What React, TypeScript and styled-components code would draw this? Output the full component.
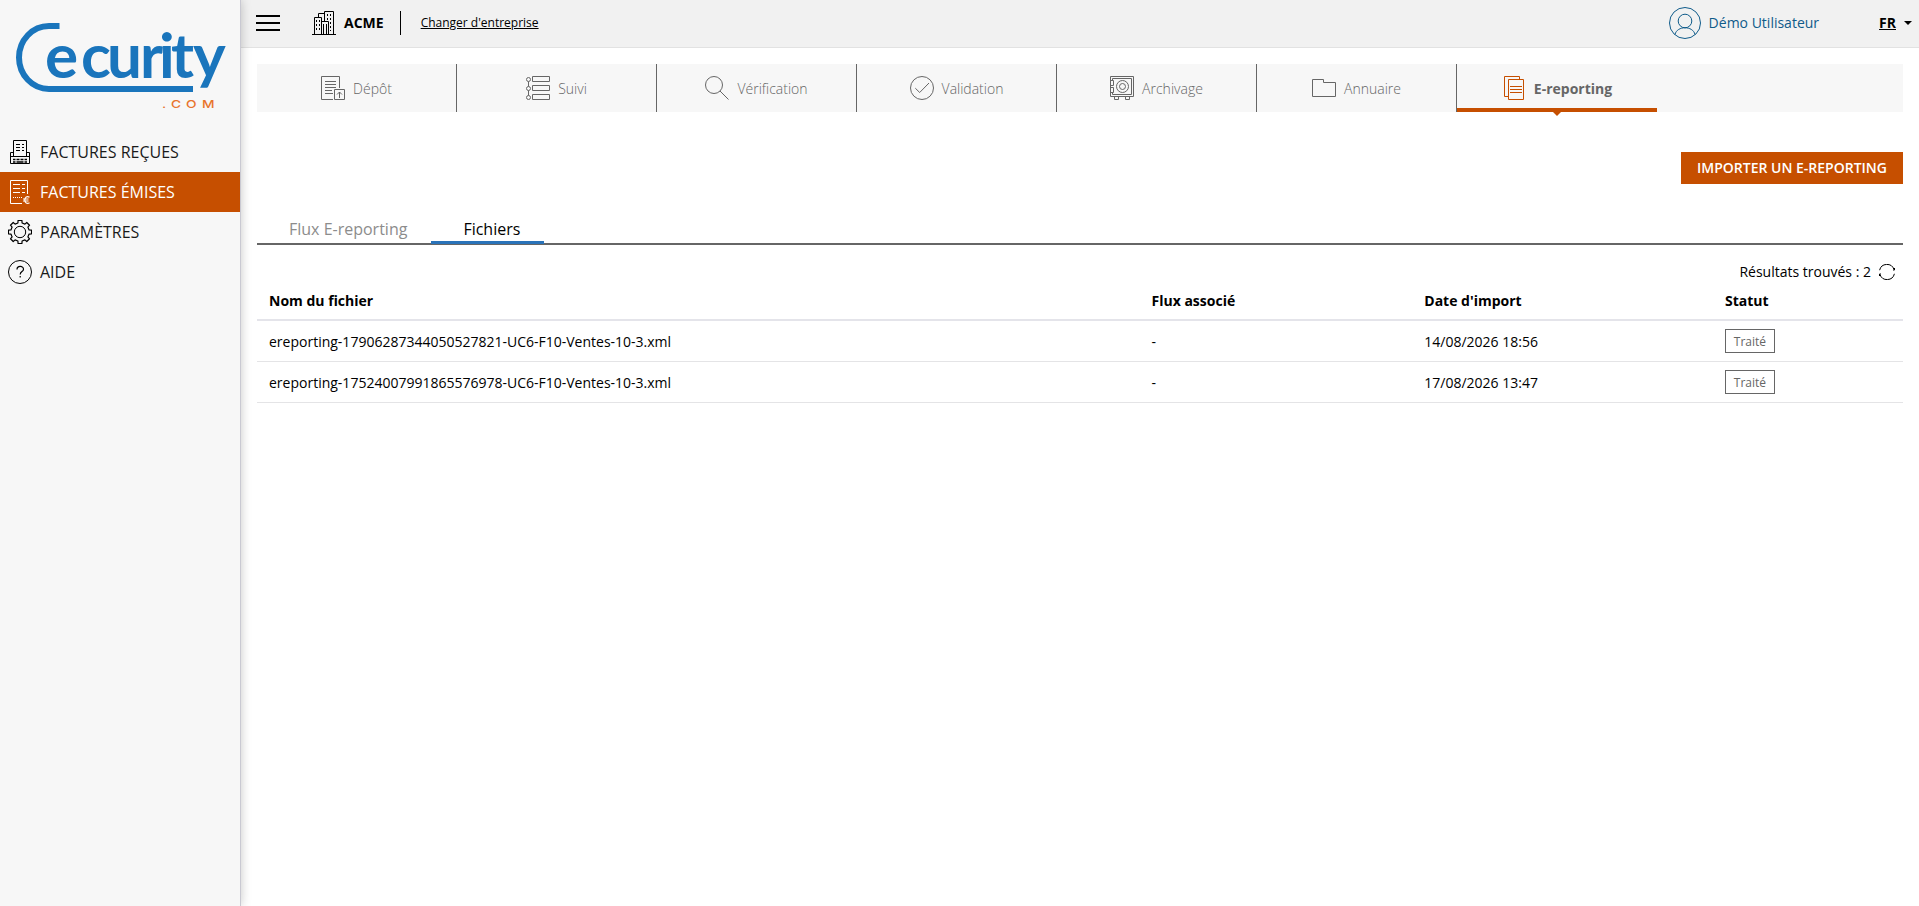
import React from "react";
import styled, { createGlobalStyle } from "styled-components";

const GlobalStyle = createGlobalStyle`
    * {
        box-sizing: border-box;
    }

    body {
        margin: 0;
        background: #fff;
        color: #000;
        font-family: "Open Sans", "Noto Sans", sans-serif;
        font-size: 14px;
    }
`

const Layout = styled.div`
    display: flex;
    min-height: 100vh;
`

const Sidebar = styled.aside`
    position: relative;
    width: 241px;
    flex: none;
    background: #f7f7f7;
    border-right: 1px solid #c9c9d2;
    box-shadow: 0 0 10px rgba(0, 0, 0, 0.22);
`

const Logo = styled.svg`
    display: block;
    width: 240px;
    height: 132px;
`

const Menu = styled.nav`
    display: flex;
    flex-direction: column;
`

const MenuItem = styled.a<{ $active?: boolean }>`
    display: flex;
    align-items: center;
    gap: 8px;
    height: 40px;
    padding: 0 8px;
    font-size: 16px;
    white-space: nowrap;
    color: ${({ $active }) => ($active ? "#fff" : "#1a1a1a")};
    background: ${({ $active }) => ($active ? "#c64f00" : "transparent")};

    svg {
        color: ${({ $active }) => ($active ? "#fff" : "#000")};
    }
`

const Main = styled.div`
    flex: 1;
    min-width: 0;
`

const Topbar = styled.header`
    display: flex;
    align-items: center;
    height: 48px;
    padding: 0 7px 2px 15px;
    background: #f1f1f1;
    border-bottom: 1px solid #e2e2e2;
`

const Burger = styled.button`
    display: flex;
    flex-direction: column;
    justify-content: space-between;
    width: 24px;
    height: 16px;
    margin-right: 32px;
    padding: 0;
    border: 0;
    background: none;

    span {
        height: 2px;
        background: #000;
    }
`

const Company = styled.div`
    display: flex;
    align-items: center;
    gap: 8px;
    height: 24px;
    margin-right: 20px;
    padding-right: 16px;
    border-right: 1px solid #000;
    font-weight: 700;
`

const ChangeLink = styled.a`
    font-size: 12px;
    text-decoration: underline;
`

const User = styled.div`
    display: flex;
    align-items: center;
    gap: 8px;
    margin-left: auto;
    margin-right: 60px;
    color: #0f5b8a;
`

const Lang = styled.div`
    display: flex;
    align-items: center;
    gap: 8px;
    font-weight: 700;

    span {
        text-decoration: underline;
    }
`

const Caret = styled.i`
    border: 4px solid transparent;
    border-top-color: #000;
    border-bottom: 0;
`

const Content = styled.main`
    padding: 16px 16px 0;
`

const Steps = styled.nav`
    display: flex;
    height: 48px;
    background: #f7f7f7;
`

const Step = styled.a<{ $active?: boolean }>`
    position: relative;
    display: flex;
    align-items: center;
    justify-content: center;
    gap: 8px;
    width: 200px;
    padding-top: ${({ $active }) => ($active ? "4px" : "0")};
    border-right: ${({ $active }) => ($active ? "0" : "1px solid #666")};
    border-bottom: ${({ $active }) => ($active ? "4px solid #c64f00" : "0")};
    color: #666;
    font-weight: ${({ $active }) => ($active ? 700 : 300)};

    svg {
        color: ${({ $active }) => ($active ? "#c64f00" : "#666")};
    }

    &::after {
        content: "";
        display: ${({ $active }) => ($active ? "block" : "none")};
        position: absolute;
        top: 48px;
        left: 96px;
        border: 4px solid transparent;
        border-top-color: #c64f00;
        border-bottom: 0;
    }
`

const Actions = styled.div`
    display: flex;
    justify-content: flex-end;
    margin-top: 40px;
`

const ImportButton = styled.button`
    width: 222px;
    height: 32px;
    padding: 0 0 2px;
    border: 0;
    background: #c64f00;
    color: #fff;
    font-family: inherit;
    font-size: 14px;
    font-weight: 600;
    white-space: nowrap;
`

const Tabs = styled.div`
    display: flex;
    height: 33px;
    margin-top: 28px;
    border-bottom: 2px solid #666;
`

const Tab = styled.a<{ $active?: boolean }>`
    height: 32px;
    padding: 5px 24px 0 32px;
    font-size: 16px;
    line-height: 24px;
    white-space: nowrap;
    color: ${({ $active }) => ($active ? "#000" : "#8c8c8c")};
    border-bottom: 3px solid ${({ $active }) => ($active ? "#2a73b9" : "transparent")};
`

const Results = styled.div`
    display: flex;
    align-items: center;
    justify-content: flex-end;
    gap: 8px;
    height: 19px;
    margin-top: 17px;
    margin-bottom: 1px;
    padding-right: 8px;
    line-height: 19px;
`

const Row = styled.div<{ $head?: boolean }>`
    display: grid;
    grid-template-columns: 882.5px 272.8px 300.7px 1fr;
    align-items: center;
    height: ${({ $head }) => ($head ? "39px" : "41px")};
    padding-left: 12px;
    border-bottom: ${({ $head }) => ($head ? "2px solid #e4e4ea" : "1px solid #e4e4e6")};
    font-weight: ${({ $head }) => ($head ? 700 : 400)};
    white-space: nowrap;
`

const Badge = styled.span`
    display: inline-flex;
    align-items: center;
    justify-content: center;
    width: 50px;
    height: 24px;
    border: 1px solid #666;
    color: #666;
    font-size: 12px;
    vertical-align: top;
`

const Svg = styled.svg<{ $size?: number }>`
    display: block;
    flex: none;
    width: ${({ $size }) => $size || 24}px;
    height: ${({ $size }) => $size || 24}px;
    fill: none;
    stroke: currentColor;
    stroke-width: 1;
`

const gearPoints = () => {
    const points: string[] = [];
    const shape = [[-13, 9.3], [-9.5, 11.7], [9.5, 11.7], [13, 9.3]];
    for (let i = 0; i < 8; i++) {
        shape.forEach(([deg, r]) => {
            const a = ((i * 45 + deg) * Math.PI) / 180;
            points.push(`${(12 + r * Math.cos(a)).toFixed(2)},${(12 + r * Math.sin(a)).toFixed(2)}`);
        });
    }
    return points.join(" ");
}

const PrinterIcon = () => (
    <Svg viewBox="0 0 24 24">
        <path d="M5.5 16V.5h13V16M5.5 12.5h-3v11h19v-11h-3M2.5 16.5h19" />
        <path d="M8 4.5h4M14 4.5h2M8 7.5h4M14 7.5h2M8 10.5h4M14 10.5h2" />
        <path strokeWidth="1.6" d="M5 19.5h2.5M8.5 19.5h3M12.5 19.5h3M16.5 19.5h2.5M5 22h2.5M8.5 22h7M16.5 22h2.5" />
    </Svg>
)

const InvoiceIcon = () => (
    <Svg viewBox="0 0 24 24">
        <path d="M14 23.5H2.5V.5h17V14" />
        <path d="M5 4.5h7M14 4.5h3M5 8.5h7M14 8.5h3M5 12.5h7M14 12.5h3" />
        <path strokeDasharray="1 1" d="M5 17.5h9" />
        <path strokeWidth="1.2" d="M21.5 17.3c-2.5-1.5-4.7 0-4.7 2.7s2.2 4.2 4.7 2.7M15 19h5.5M15 21h5.5" />
    </Svg>
)

const GearIcon = () => (
    <Svg viewBox="0 0 24 24">
        <polygon points={gearPoints()} strokeWidth="1.2" strokeLinejoin="round" />
        <circle cx="12" cy="12" r="5.7" />
    </Svg>
)

const HelpIcon = () => (
    <Svg viewBox="0 0 24 24">
        <circle cx="12" cy="12" r="11.5" />
        <path strokeWidth="1.2" d="M9 9.5c0-4 6.5-4 6.5-.3 0 2.5-3.3 2.3-3.3 5.3M12.2 16v1.5" />
    </Svg>
)

const BuildingsIcon = () => (
    <Svg viewBox="0 0 24 24">
        <path d="M0 23.5h24M2.5 23V6.5h7V11M6.5 6V2.5h6M12.5 10V.5h9V23M9.5 23V10.5h7V23M11.5 23v-10M14.5 23v-10" />
        <path strokeDasharray="2 2" d="M4.5 9v11M7.5 9v11M15.5 3v6M18.5 3v17" />
    </Svg>
)

const UserIcon = () => (
    <Svg $size={32} viewBox="0 0 32 32">
        <circle cx="16" cy="16" r="15.5" />
        <circle cx="16" cy="14" r="6.8" />
        <path d="M6 27.5c2-9 18-9 20 0" />
    </Svg>
)

const DepotIcon = () => (
    <Svg viewBox="0 0 24 24">
        <path d="M12 23.5H.5V.5h18V12M13.5 13.5h10v10h-10z" />
        <path d="M4 5.5h11M4 8.5h11M4 11.5h11M4 14.5h7M4 17.5h8M18.5 22v-6M16 18.5l2.5-2.5 2.5 2.5" />
    </Svg>
)

const SuiviIcon = () => (
    <Svg viewBox="0 0 24 24">
        <path d="M6.5.5h17v5h-17zM6.5 9.5h17v5h-17zM6.5 18.5h17v5h-17zM2.5 5.5v5M2.5 14.5v5" />
        <circle cx="2.5" cy="3.5" r="2" />
        <circle cx="2.5" cy="12.5" r="2" />
        <circle cx="2.5" cy="21.5" r="2" />
    </Svg>
)

const SearchIcon = () => (
    <Svg viewBox="0 0 24 24">
        <circle cx="9" cy="9" r="8.5" />
        <path d="M15 15l8.5 8.5" />
    </Svg>
)

const CheckIcon = () => (
    <Svg viewBox="0 0 24 24">
        <circle cx="12" cy="12" r="11.5" />
        <path d="M5.3 12.2l4.4 4.3L19 7" />
    </Svg>
)

const SafeIcon = () => (
    <Svg viewBox="0 0 24 24">
        <path d="M.5.5h23v20H.5zM2.5 4.5v-2h19v16h-19v-2M.5 4.5h3v5h-3zM.5 11.5h3v5h-3zM4.5 20.5h4v3h-4zM15.5 20.5h4v3h-4z" />
        <circle cx="12.5" cy="10.5" r="6" />
        <circle cx="12.5" cy="10.5" r="3" />
    </Svg>
)

const FolderIcon = () => (
    <Svg viewBox="0 0 24 24">
        <path d="M.5 3.5h11v3h12v14H.5z" />
    </Svg>
)

const FilesIcon = () => (
    <Svg viewBox="0 0 24 24">
        <path d="M6 20.5H2.5V.5h15V3M6.5 3.5h15v20h-15zM8 10.5h12M8 13.5h12M8 16.5h12" />
    </Svg>
)

const RefreshIcon = () => (
    <Svg $size={16} viewBox="0 0 16 16">
        <path d="M.6 6.2A7.5 7.5 0 0 1 15 5.5M15.4 9.8A7.5 7.5 0 0 1 1 10.5" />
        <path d="M15.5 4v2h-1.500M.5 12v-2h1.500" />
    </Svg>
)

const menu = [
    { label: "FACTURES REÇUES", icon: <PrinterIcon /> },
    { label: "FACTURES ÉMISES", icon: <InvoiceIcon />, active: true },
    { label: "PARAMÈTRES", icon: <GearIcon /> },
    { label: "AIDE", icon: <HelpIcon /> },
]

const steps = [
    { label: "Dépôt", icon: <DepotIcon /> },
    { label: "Suivi", icon: <SuiviIcon /> },
    { label: "Vérification", icon: <SearchIcon /> },
    { label: "Validation", icon: <CheckIcon /> },
    { label: "Archivage", icon: <SafeIcon /> },
    { label: "Annuaire", icon: <FolderIcon /> },
    { label: "E-reporting", icon: <FilesIcon />, active: true },
]

const files = [
    { name: "ereporting-17906287344050527821-UC6-F10-Ventes-10-3.xml", flux: "-", date: "14/08/2026 18:56", status: "Traité" },
    { name: "ereporting-17524007991865576978-UC6-F10-Ventes-10-3.xml", flux: "-", date: "17/08/2026 13:47", status: "Traité" },
]

export default function App() {
    return (
        <Layout>
            <GlobalStyle />
            <Sidebar>
                <Logo viewBox="0 0 240 132">
                    <path d="M59.5 26H49A30 31.5 0 0 0 49 89h144" fill="none" stroke="#1a75bc" strokeWidth="6" />
                    <text x="45 81 107 140 159 171 193" y="78" fontFamily="Lato, sans-serif" fontSize="62" fontWeight="700" fill="#1a75bc">ecurity</text>
                    <text transform="translate(0 108) scale(1.25 1)" x="129.6 136.8 148.8 161.6" y="0" fontFamily="Inter, sans-serif" fontSize="11" fontWeight="500" fill="#e8742c">.COM</text>
                </Logo>
                <Menu>
                    {menu.map((item) => (
                        <MenuItem key={item.label} $active={item.active}>
                            {item.icon}
                            {item.label}
                        </MenuItem>
                    ))}
                </Menu>
            </Sidebar>
            <Main>
                <Topbar>
                    <Burger><span /><span /><span /></Burger>
                    <Company><BuildingsIcon />ACME</Company>
                    <ChangeLink>Changer d'entreprise</ChangeLink>
                    <User><UserIcon />Démo Utilisateur</User>
                    <Lang><span>FR</span><Caret /></Lang>
                </Topbar>
                <Content>
                    <Steps>
                        {steps.map((step) => (
                            <Step key={step.label} $active={step.active}>
                                {step.icon}
                                {step.label}
                            </Step>
                        ))}
                    </Steps>
                    <Actions>
                        <ImportButton>IMPORTER UN E-REPORTING</ImportButton>
                    </Actions>
                    <Tabs>
                        <Tab>Flux E-reporting</Tab>
                        <Tab $active>Fichiers</Tab>
                    </Tabs>
                    <Results>Résultats trouvés : 2 <RefreshIcon /></Results>
                    <Row $head>
                        <div>Nom du fichier</div>
                        <div>Flux associé</div>
                        <div>Date d'import</div>
                        <div>Statut</div>
                    </Row>
                    {files.map((file) => (
                        <Row key={file.name}>
                            <div>{file.name}</div>
                            <div>{file.flux}</div>
                            <div>{file.date}</div>
                            <div><Badge>{file.status}</Badge></div>
                        </Row>
                    ))}
                </Content>
            </Main>
        </Layout>
    )
}
